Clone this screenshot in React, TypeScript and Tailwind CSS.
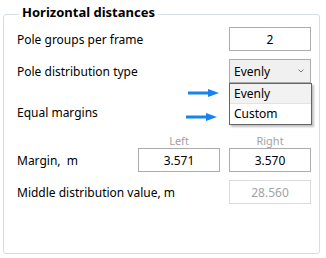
const font = { fontFamily: '"Noto Sans", "Liberation Sans", sans-serif' };

function Arrow() {
  return (
    <svg width="32" height="8" viewBox="0 0 32 8">
      <rect x="0" y="2.5" width="22" height="3" fill="#1583f4" />
      <path d="M20 0 L31 4 L20 8 Z" fill="#1583f4" />
    </svg>
  );
}

function Field({ value, muted }: { value: string; muted?: boolean }) {
  return (
    <div
      className={`flex h-[24px] w-[82px] items-center justify-center border bg-white pt-[1px] text-[12px] ${
        muted ? "border-[#dadada] text-[#a3a3a3]" : "border-[#acacac] text-black"
      }`}
    >
      {value}
    </div>
  );
}

export default function App() {
  return (
    <div className="h-[258px] w-[326px] bg-white pl-[3px] pt-[14px]" style={font}>
      <div className="relative flex h-[240px] w-[317px] flex-col rounded-[3px] border border-[#d5dde3] pl-[13px] pr-[8px] text-[12px] text-black">
        <div className="-mt-[12px] ml-[2px] h-[18px] w-fit bg-white px-[3px] text-[13px] font-bold leading-[18px]">
          Horizontal distances
        </div>

        <div className="mt-[6px] flex h-[24px] items-center justify-between">
          <span className="pt-[2px]">Pole groups per frame</span>
          <Field value="2" />
        </div>

        <div className="mt-[8px] flex h-[24px] items-center justify-between">
          <span className="pt-[2px]">Pole distribution type</span>
          <div className="flex h-[24px] w-[82px] items-center justify-between border border-[#acacac] bg-[#f0f0f0] pl-[4px] pr-[6px]">
            <span className="pt-[1px]">Evenly</span>
            <svg width="6" height="4" viewBox="0 0 6 4">
              <path d="M0.5 0.5 L3 3 L5.5 0.5" fill="none" stroke="#7a7a7a" strokeWidth="1" />
            </svg>
          </div>
        </div>

        <div className="mt-[17px] flex h-[24px] items-center">
          <span className="pt-[2px]">Equal margins</span>
        </div>

        <div className="mt-[10px] flex h-[14px] justify-end gap-[9px] text-[11px] leading-[14px] text-[#a3a3a3]">
          <span className="w-[82px] text-center">Left</span>
          <span className="w-[82px] text-center">Right</span>
        </div>

        <div className="flex h-[24px] items-center justify-between">
          <span className="pt-[2px]">Margin,&nbsp; m</span>
          <div className="flex gap-[9px]">
            <Field value="3.571" />
            <Field value="3.570" />
          </div>
        </div>

        <div className="mt-[8px] flex h-[24px] items-center justify-between">
          <span className="pt-[2px]">Middle distribution value, m</span>
          <Field value="28.560" muted />
        </div>

        <div className="absolute left-[225px] top-[68px] flex w-[83px] flex-col border border-[#646464] bg-white shadow-[2px_2px_2px_rgba(0,0,0,0.25)]">
          <div className="flex h-[20px] items-center border-b border-[#e3e3e3] bg-[#f2f2f2] pl-[4px]">Evenly</div>
          <div className="flex h-[20px] items-center pl-[4px]">Custom</div>
        </div>

        <div className="absolute left-[184px] top-[74px]">
          <Arrow />
        </div>
        <div className="absolute left-[182px] top-[98px]">
          <Arrow />
        </div>
      </div>
    </div>
  );
}
